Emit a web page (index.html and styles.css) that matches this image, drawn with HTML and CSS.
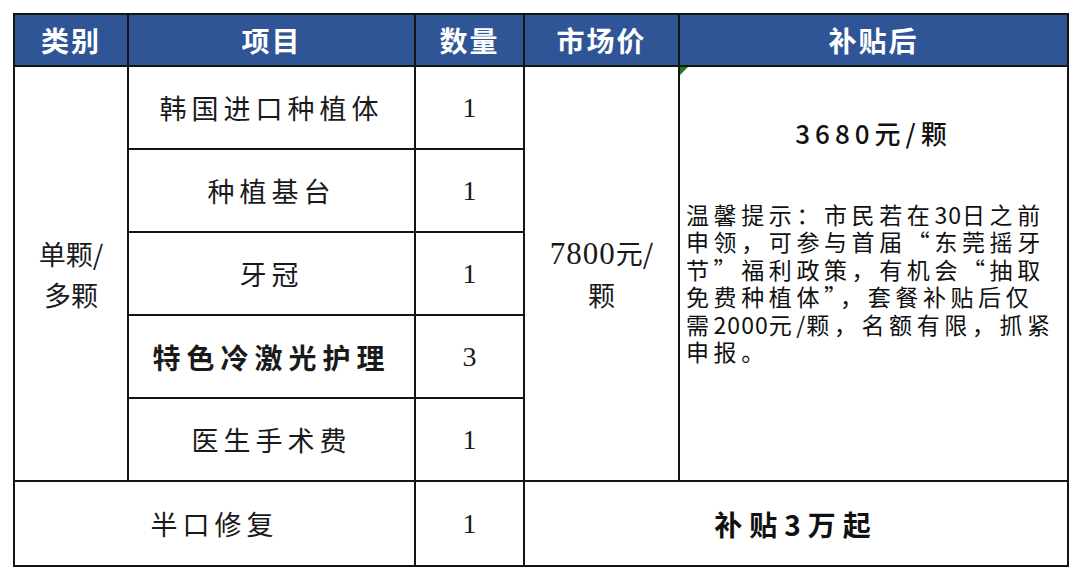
FILE: index.html
```html
<!DOCTYPE html>
<html lang="zh-CN">
<head>
<meta charset="utf-8">
<title>种植牙补贴表</title>
<link rel="stylesheet" href="styles.css">
</head>
<body>
<div class="wrap">
<table class="price">
  <colgroup>
    <col class="c1"><col class="c2"><col class="c3"><col class="c4"><col class="c5">
  </colgroup>
  <thead>
    <tr class="head">
      <th>类别</th>
      <th>项目</th>
      <th>数量</th>
      <th>市场价</th>
      <th>补贴后</th>
    </tr>
  </thead>
  <tbody>
    <tr class="row">
      <td rowspan="5" class="cat">单颗/<br>多颗</td>
      <td class="item">韩国进口种植体</td>
      <td class="num">1</td>
      <td rowspan="5" class="market"><span class="digits">7800</span>元/<br>颗</td>
      <td rowspan="5" class="after">
        <div class="after-inner">
          <div class="after-title">3680元/颗</div>
          <div class="note">温馨提示：市民若在<span class="tight">30</span>日之前<br>申领，可参与首届“东莞摇牙<br>节”福利政策，有机会“抽取<br>免费种植体”，套餐补贴后仅<br>需<span class="tight">2000</span>元<span class="tight">/</span>颗，名额有限，抓紧<br>申报。</div>
        </div>
      </td>
    </tr>
    <tr class="row">
      <td class="item">种植基台</td>
      <td class="num">1</td>
    </tr>
    <tr class="row">
      <td class="item">牙冠</td>
      <td class="num">1</td>
    </tr>
    <tr class="row">
      <td class="item strong">特色冷激光护理</td>
      <td class="num">3</td>
    </tr>
    <tr class="row">
      <td class="item">医生手术费</td>
      <td class="num">1</td>
    </tr>
    <tr class="row last">
      <td colspan="2" class="item half">半口修复</td>
      <td class="num">1</td>
      <td colspan="2" class="bonus">补贴3万起</td>
    </tr>
  </tbody>
</table>
</div>
</body>
</html>
```

FILE: styles.css
```css
html, body {
  margin: 0;
  padding: 0;
  background: #ffffff;
}

.wrap {
  padding: 13px 0 0 13px;
}

.price {
  border-collapse: collapse;
  table-layout: fixed;
  width: 1054px;
  color: #111111;
  font-family: "Noto Sans CJK SC", "Liberation Sans", sans-serif;
}

.c1 { width: 114px; }
.c2 { width: 287px; }
.c3 { width: 109px; }
.c4 { width: 155px; }
.c5 { width: 389px; }

.price th,
.price td {
  border: 2px solid #141414;
  padding: 0;
  text-align: center;
  vertical-align: middle;
}

.head {
  height: 52px;
}

.head th {
  background: #2f5597;
  color: #ffffff;
  font-family: "Noto Sans CJK SC", sans-serif;
  font-weight: 700;
  font-size: 28px;
  letter-spacing: 2px;
  line-height: 1;
}

.row {
  height: 83px;
}

.row.last {
  height: 85px;
}

.item {
  font-family: "Noto Sans CJK SC", sans-serif;
  font-weight: 400;
  font-size: 27px;
  letter-spacing: 5px;
  color: #1a1a1a;
}

.item.strong {
  font-weight: 700;
  font-size: 28px;
  letter-spacing: 6px;
}

.num {
  font-family: "Liberation Serif", "Times New Roman", serif;
  font-size: 28px;
  color: #1a1a1a;
}

.cat {
  font-family: "Noto Sans CJK SC", sans-serif;
  font-size: 27px;
  line-height: 41px;
  color: #1a1a1a;
}

.market {
  font-family: "Noto Sans CJK SC", sans-serif;
  font-size: 27px;
  line-height: 41px;
  color: #1a1a1a;
}

.market .digits {
  font-family: "Liberation Serif", serif;
  font-size: 31px;
  letter-spacing: 1px;
}

.price td.after {
  position: relative;
  vertical-align: top;
  text-align: left;
}

.after::before {
  content: "";
  position: absolute;
  left: 0;
  top: 0;
  width: 0;
  height: 0;
  border-top: 8px solid #1f7a1f;
  border-right: 8px solid transparent;
}

.after-inner {
  display: flex;
  flex-direction: column;
  padding: 48px 0 0 6px;
}

.after-title {
  text-align: center;
  font-weight: 500;
  font-size: 26px;
  letter-spacing: 5px;
  line-height: 36px;
  padding-right: 6px;
}

.note {
  margin-top: 50px;
  font-size: 23px;
  letter-spacing: 4.6px;
  line-height: 27.4px;
  white-space: nowrap;
}

.note .tight {
  letter-spacing: 1px;
}

.bonus {
  font-weight: 700;
  font-size: 28px;
  letter-spacing: 7px;
}
```
